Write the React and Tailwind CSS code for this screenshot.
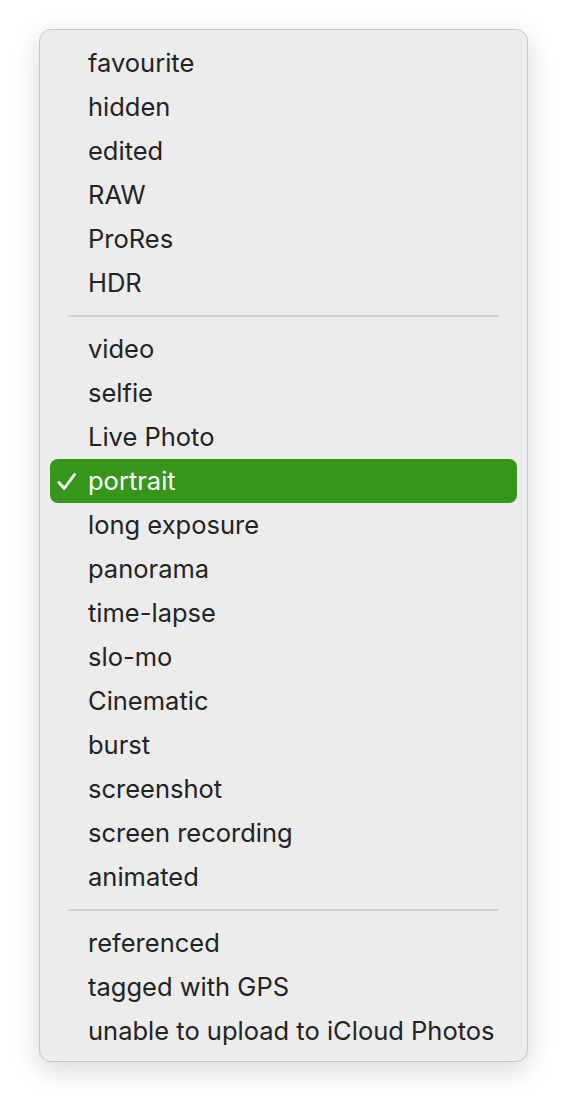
import React from 'react';

const groups = [
  ['favourite', 'hidden', 'edited', 'RAW', 'ProRes', 'HDR'],
  ['video', 'selfie', 'Live Photo', 'portrait', 'long exposure', 'panorama', 'time-lapse', 'slo-mo', 'Cinematic', 'burst', 'screenshot', 'screen recording', 'animated'],
  ['referenced', 'tagged with GPS', 'unable to upload to iCloud Photos'],
];

const Check = () => (
  <svg width="20" height="18" viewBox="0 0 20 18" className="block">
    <path d="M2 9.5 L7.2 15.5 L17.5 1.5" fill="none" stroke="currentColor" strokeWidth="2.8" strokeLinecap="round" strokeLinejoin="round" />
  </svg>
);

const MenuItem = ({ label, checked }) => (
  <div
    className={`h-[44px] mx-[10px] rounded-[8px] flex items-center pl-[7px] ${
      checked ? 'bg-[#36961a] text-white' : 'text-[#232323]'
    }`}
  >
    <span className="w-[31px] flex items-center pt-[1px]">{checked ? <Check /> : null}</span>
    <span className="pt-[1px]">{label}</span>
  </div>
);

export default function App() {
  return (
    <div className="w-[566px] h-[1108px] bg-white pt-[29px] pl-[39px]" style={{ fontFamily: 'Inter, "Noto Sans", sans-serif' }}>
      <div className="w-[489px] bg-[#ececec] border border-[#c6c6c6] rounded-[12px] pt-[11px] pb-[8px] text-[25.5px] shadow-[0_8px_28px_rgba(0,0,0,0.16)]">
        {groups.map((items, gi) => (
          <div key={gi}>
            {gi > 0 && (
              <div className="h-[22px] flex items-center px-[28px]">
                <div className="h-[2px] w-full bg-[#d3d3d3]" />
              </div>
            )}
            {items.map((item) => (
              <MenuItem key={item} label={item} checked={item === 'portrait'} />
            ))}
          </div>
        ))}
      </div>
    </div>
  );
}
